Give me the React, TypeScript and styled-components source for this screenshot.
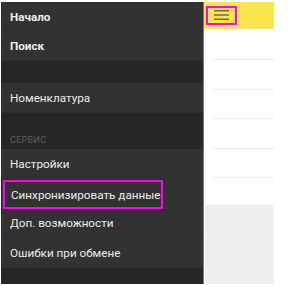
import React from "react";
import styled, { createGlobalStyle } from "styled-components";

const Global = createGlobalStyle`
  html, body { margin: 0; padding: 0; background: #ffffff; }
  body { font-family: Roboto, "Noto Sans", "Liberation Sans", sans-serif; }
`;

const Frame = styled.div`
  display: flex;
  padding: 2px 0 0 1px;
  width: 273px;
  height: 282px;
`;

const Drawer = styled.nav`
  width: 202px;
  background: #323232;
  border-right: 1px solid #7a7a7a;
  display: flex;
  flex-direction: column;
`;

const Item = styled.div<{ $bold?: boolean; $h: number; $hl?: boolean }>`
  height: ${(p) => p.$h}px;
  box-sizing: border-box;
  display: flex;
  align-items: center;
  padding-left: ${(p) => (p.$hl ? 6 : 9)}px;
  margin: ${(p) => (p.$hl ? "0 40px 0 2px" : "0")};
  border: ${(p) => (p.$hl ? "2px solid #ff00f0" : "none")};
  border-bottom: ${(p) => (p.$hl ? "2px solid #ff00f0" : "1px solid #2d2d2d")};
  color: #ececec;
  font-size: 11.7px;
  font-weight: ${(p) => (p.$bold ? 700 : 400)};
  white-space: nowrap;
`;

const Band = styled.div<{ $h: number }>`
  height: ${(p) => p.$h}px;
  background: #262626;
  box-sizing: border-box;
  display: flex;
  align-items: flex-end;
  padding: 0 0 4px 9px;
  color: #5e5e5e;
  font-size: 9px;
  letter-spacing: 0.3px;
`;

const Main = styled.div`
  width: 70px;
  display: flex;
  flex-direction: column;
`;

const Header = styled.div`
  height: 27px;
  background: #fbe54c;
  border-bottom: 1px solid #f5e58a;
  box-sizing: border-box;
  display: flex;
  align-items: center;
  padding-left: 2px;
`;

const MenuBox = styled.div`
  width: 31px;
  height: 19px;
  box-sizing: border-box;
  border: 2px solid #ff00f0;
  display: flex;
  align-items: center;
  justify-content: center;
`;

const List = styled.div`
  display: flex;
  flex-direction: column;
  padding-left: 9px;
  padding-top: 2px;
`;

const Row = styled.div`
  height: 29.4px;
  box-sizing: border-box;
  border-bottom: 1px solid #ececec;
`;

const Gray = styled.div`
  margin-top: 27px;
  margin-left: 1px;
  flex: 1;
  background: #efefef;
`;

export default function App() {
  return (
    <>
      <Global />
      <Frame>
        <Drawer>
          <Item $bold $h={30}>Начало</Item>
          <Item $bold $h={29}>Поиск</Item>
          <Band $h={22} />
          <Item $h={30}>Номенклатура</Item>
          <Band $h={36}>СЕРВИС</Band>
          <Item $h={31}>Настройки</Item>
          <Item $hl $h={29}>Синхронизировать данные</Item>
          <Item $h={29}>Доп. возможности</Item>
          <Item $h={30}>Ошибки при обмене</Item>
          <Band $h={16} />
        </Drawer>
        <Main>
          <Header>
            <MenuBox>
              <svg width="15" height="10" viewBox="0 0 15 10">
                <rect x="0" y="0" width="15" height="1.4" fill="#6b6330" />
                <rect x="0" y="4.3" width="15" height="1.4" fill="#6b6330" />
                <rect x="0" y="8.6" width="15" height="1.4" fill="#6b6330" />
              </svg>
            </MenuBox>
          </Header>
          <List>
            <Row />
            <Row />
            <Row />
            <Row />
            <Row />
          </List>
          <Gray />
        </Main>
      </Frame>
    </>
  );
}
